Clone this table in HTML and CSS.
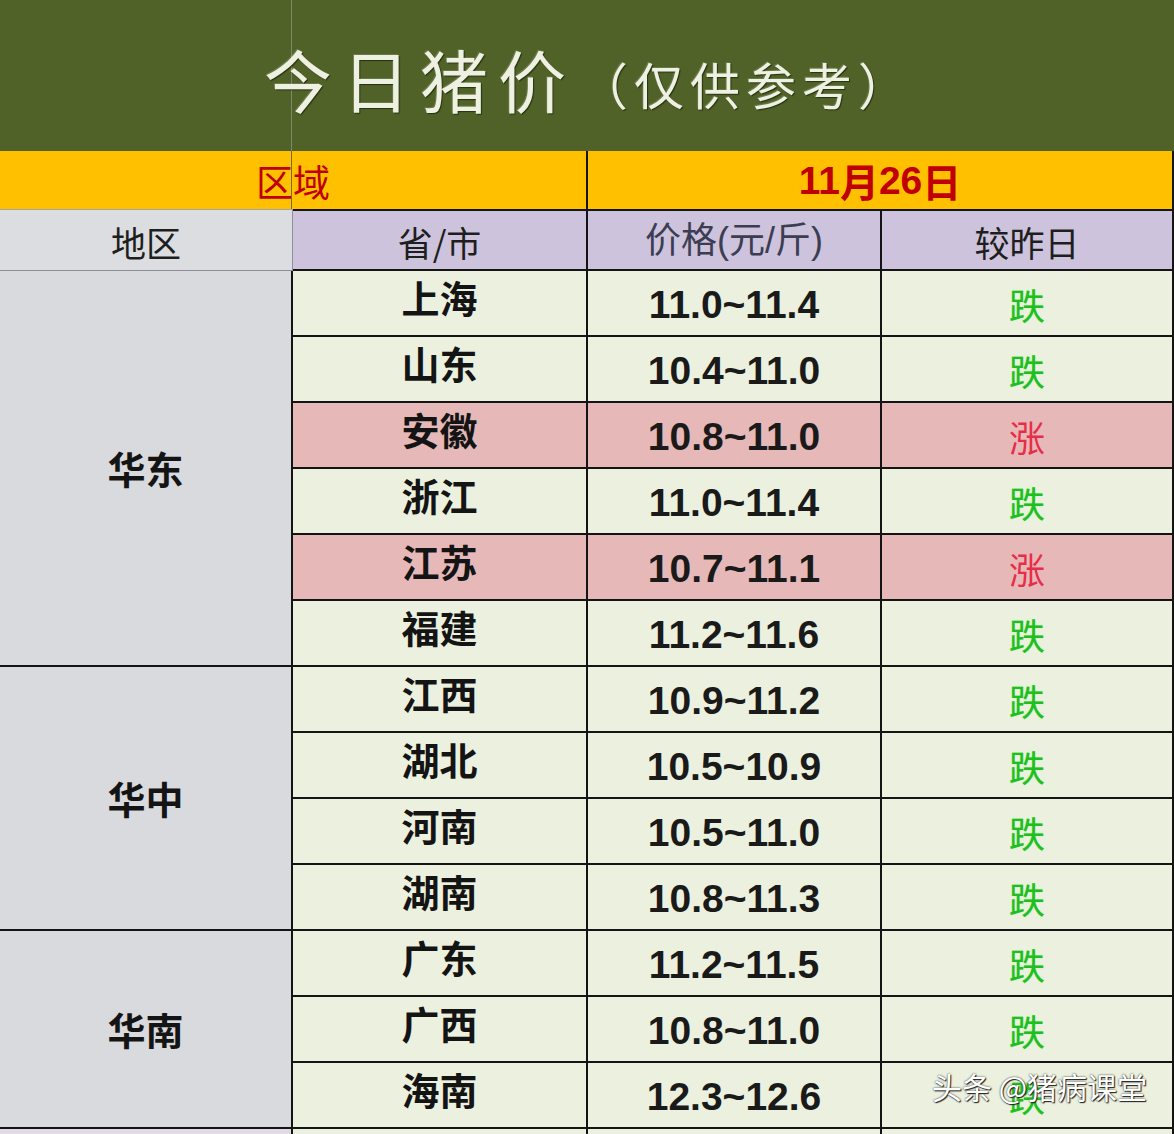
FILE: index.html
```html
<!DOCTYPE html>
<html lang="zh-CN">
<head>
<meta charset="utf-8">
<title>今日猪价（仅供参考）</title>
<link rel="stylesheet" href="styles.css">
</head>
<body>
<div class="page">
  <header class="title-band">
    <span class="title-main">今日猪价</span><span class="title-sub">（仅供参考）</span>
  </header>
  <div class="sheet">
    <div class="cell band band-left">区域</div>
    <div class="cell band band-right"><span class="num">11</span>月<span class="num">26</span>日</div>

    <div class="cell head head-region">地区</div>
    <div class="cell head head-lav">省/市</div>
    <div class="cell head head-lav head-price">价格(元/斤)</div>
    <div class="cell head head-lav">较昨日</div>

    <div class="cell region span-6">华东</div>
    <div class="cell prov">上海</div><div class="cell price">11.0~11.4</div><div class="cell chg down">跌</div>
    <div class="cell prov">山东</div><div class="cell price">10.4~11.0</div><div class="cell chg down">跌</div>
    <div class="cell prov up-row">安徽</div><div class="cell price up-row">10.8~11.0</div><div class="cell chg up up-row">涨</div>
    <div class="cell prov">浙江</div><div class="cell price">11.0~11.4</div><div class="cell chg down">跌</div>
    <div class="cell prov up-row">江苏</div><div class="cell price up-row">10.7~11.1</div><div class="cell chg up up-row">涨</div>
    <div class="cell prov">福建</div><div class="cell price">11.2~11.6</div><div class="cell chg down">跌</div>

    <div class="cell region span-4">华中</div>
    <div class="cell prov">江西</div><div class="cell price">10.9~11.2</div><div class="cell chg down">跌</div>
    <div class="cell prov">湖北</div><div class="cell price">10.5~10.9</div><div class="cell chg down">跌</div>
    <div class="cell prov">河南</div><div class="cell price">10.5~11.0</div><div class="cell chg down">跌</div>
    <div class="cell prov">湖南</div><div class="cell price">10.8~11.3</div><div class="cell chg down">跌</div>

    <div class="cell region span-3">华南</div>
    <div class="cell prov">广东</div><div class="cell price">11.2~11.5</div><div class="cell chg down">跌</div>
    <div class="cell prov">广西</div><div class="cell price">10.8~11.0</div><div class="cell chg down">跌</div>
    <div class="cell prov">海南</div><div class="cell price">12.3~12.6</div><div class="cell chg down">跌</div>

    <div class="cell region-next"></div>
    <div class="cell"></div><div class="cell"></div><div class="cell"></div>
  </div>
  <div class="watermark">头条 @猪病课堂</div>
</div>
</body>
</html>
```
FILE: styles.css
```css
html, body {
  margin: 0;
  padding: 0;
}
body {
  width: 1174px;
  height: 1134px;
  overflow: hidden;
  background: #ebf1de;
  font-family: "Noto Sans CJK SC", sans-serif;
}
.page {
  position: relative;
  width: 1174px;
  height: 1134px;
  overflow: hidden;
}

/* title band */
.title-band {
  height: 151px;
  box-sizing: border-box;
  display: flex;
  align-items: center;
  padding-left: 264px;
  padding-top: 6px;
  background:
    linear-gradient(to right, transparent 291px, #7f876d 291px, #7f876d 292px, transparent 292px),
    #506228;
  color: #eef0e2;
  text-shadow: 1px 1px 1px #27310f, -1px -1px 0 rgba(255,255,255,0.15);
  white-space: nowrap;
}
.title-main {
  font-size: 68px;
  letter-spacing: 10px;
  font-weight: 400;
  line-height: 1;
}
.title-sub {
  font-size: 50px;
  letter-spacing: 6px;
  font-weight: 400;
  line-height: 1;
  padding-top: 8px;
  margin-left: 2px;
}

/* sheet grid */
.sheet {
  display: grid;
  grid-template-columns: 291px 293px 292px 290px;
  grid-template-rows: 58px 58px repeat(13, 64px) 20px;
  gap: 2px;
  padding-right: 2px;
  width: max-content;
  background: #141414;
}
.cell {
  display: flex;
  align-items: center;
  justify-content: center;
  background: #ebf1de;
  line-height: 1;
  white-space: nowrap;
}

.band {
  background: #ffc000;
  color: #c00000;
  font-size: 37px;
  grid-column: span 2;
}
.band-left {
  background:
    linear-gradient(to right, transparent 291px, #7a6a3a 291px, #7a6a3a 292px, transparent 292px),
    #ffc000;
  padding-top: 3px;
}
.band-right {
  font-weight: 700;
  font-size: 39px;
  padding-top: 1px;
}
.num {
  font-family: "Liberation Sans", Arial, sans-serif;
  font-weight: 700;
}

.head {
  font-size: 35px;
  color: #1e1e1e;
  padding-top: 2px;
}
.head-region {
  background: #dcdde0;
  margin: -2px -2px -2px 0;
  border-top: 1px solid #a4a4a4;
  border-right: 1px solid #8e8e96;
  border-bottom: 1px solid #8e8e96;
}
.head-lav {
  background: #cdc3dc;
}
.head-price {
  color: #3c3d52;
  font-size: 36px;
  font-family: "Liberation Sans", "Noto Sans CJK SC", sans-serif;
}

.region {
  grid-column: 1;
  background: #d9dadd;
  font-size: 38px;
  font-weight: 700;
  color: #141414;
}
.span-6 { grid-row: span 6; }
.span-4 { grid-row: span 4; }
.span-3 { grid-row: span 3; }
.region-next {
  grid-column: 1;
  background: #e0dae4;
}

.prov {
  font-size: 38px;
  font-weight: 700;
  color: #141414;
  padding-bottom: 12px;
  box-sizing: border-box;
}
.price {
  font-family: "Liberation Sans", Arial, sans-serif;
  font-weight: 700;
  font-size: 39px;
  color: #1a1a1a;
  padding-top: 2px;
}
.chg {
  font-size: 36px;
  padding-top: 2px;
}
.down {
  color: #1fbf22;
  text-shadow: 0 0 1px rgba(60, 220, 60, 0.6);
}
.up {
  color: #e62e48;
}
.up-row {
  background: #e6b9b8;
}

/* watermark overlay */
.watermark {
  position: absolute;
  left: 932px;
  top: 1067px;
  font-size: 30px;
  color: #ffffff;
  text-shadow: 0 0 2px #222, 1px 1px 1px #222;
  white-space: nowrap;
  line-height: 1.3;
}
```
